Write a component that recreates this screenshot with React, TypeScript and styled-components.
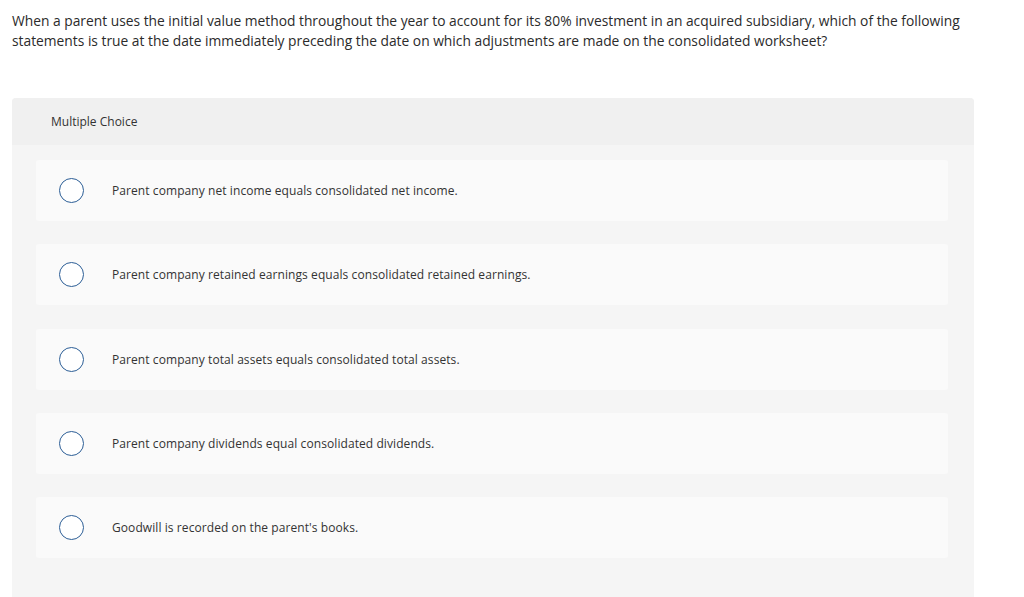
import React, { FC } from "react";
import styled, { createGlobalStyle } from "styled-components";

const GlobalStyle = createGlobalStyle`
  html, body {
    margin: 0;
    padding: 0;
    background: #ffffff;
  }
  body {
    font-family: "Open Sans", "Liberation Sans", sans-serif;
    color: #333333;
  }
`;

const Page = styled.div`
  padding: 11px 50px 0 12px;
  height: 597px;
  box-sizing: border-box;
  overflow: hidden;
`;

const Prompt = styled.p`
  margin: 0 0 47px;
  font-size: 13.8px;
  line-height: 20px;
  color: #2b2b2b;
`;

const Panel = styled.div`
  background: #f5f5f5;
  border-radius: 4px 4px 0 0;
  padding-bottom: 40px;
`;

const PanelHeader = styled.div`
  background: #f0f0f0;
  border-radius: 4px 4px 0 0;
  height: 47px;
  display: flex;
  align-items: center;
  padding-left: 39px;
  font-size: 12px;
  color: #333333;
`;

const OptionList = styled.ul`
  list-style: none;
  margin: 0;
  padding: 15px 26px 0 24px;
  display: flex;
  flex-direction: column;
  gap: 23.3px;
`;

const Option = styled.li`
  background: #fafafa;
  border-radius: 3px;
  height: 61px;
  display: flex;
  align-items: center;
  padding-left: 23px;
  font-size: 12px;
  letter-spacing: 0.08px;
  color: #333333;
`;

const Radio = styled.span`
  width: 23px;
  height: 23px;
  border: 1.5px solid #2c5e96;
  border-radius: 50%;
  background: #ffffff;
  flex: none;
  margin-right: 28px;
`;

const choices = [
  "Parent company net income equals consolidated net income.",
  "Parent company retained earnings equals consolidated retained earnings.",
  "Parent company total assets equals consolidated total assets.",
  "Parent company dividends equal consolidated dividends.",
  "Goodwill is recorded on the parent's books.",
];

const App: FC = () => {
  return (
    <>
      <GlobalStyle />
      <Page>
        <Prompt>
          When a parent uses the initial value method throughout the year to
          account for its 80% investment in an acquired subsidiary, which of
          the following statements is true at the date immediately preceding
          the date on which adjustments are made on the consolidated worksheet?
        </Prompt>
        <Panel>
          <PanelHeader>Multiple Choice</PanelHeader>
          <OptionList>
            {choices.map((choice) => (
              <Option key={choice}>
                <Radio />
                {choice}
              </Option>
            ))}
          </OptionList>
        </Panel>
      </Page>
    </>
  );
};

export default App;
